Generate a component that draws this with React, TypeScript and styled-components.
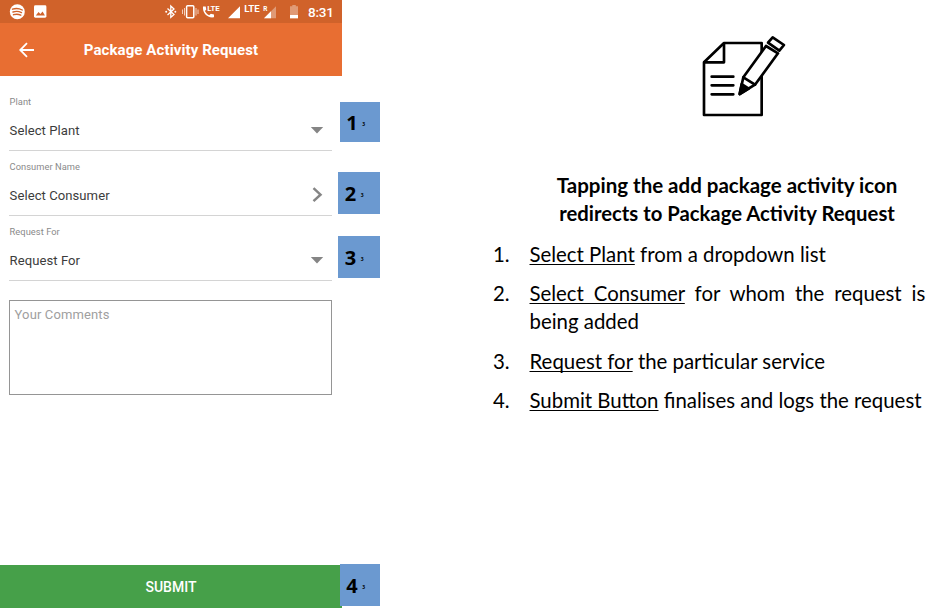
import React from 'react';
import styled, { createGlobalStyle } from 'styled-components';

const GlobalStyle = createGlobalStyle`
  * { box-sizing: border-box; }
  body { margin: 0; background: #fff; overflow: hidden; }
`;

const Page = styled.main`
  display: flex;
  width: 936px;
  height: 608px;
  background: #fff;
`;

const Phone = styled.section`
  position: relative;
  display: flex;
  flex-direction: column;
  flex: 0 0 342px;
  height: 608px;
  font-family: Roboto, sans-serif;
`;

const StatusBar = styled.div`
  flex: 0 0 23px;
  background: #d0622a;
`;

const StatusIcons = styled.svg`
  display: block;
  width: 342px;
  height: 23px;
`;

const AppBar = styled.header`
  display: flex;
  align-items: center;
  flex: 0 0 53px;
  padding-left: 19px;
  background: #e86e32;
`;

const BackIcon = styled.svg`
  width: 16px;
  height: 16px;
`;

const Title = styled.h1`
  margin: 1px 0 0;
  width: 272px;
  text-align: center;
  color: #fff;
  font-size: 15px;
  font-weight: 700;
  letter-spacing: 0.1px;
`;

const Form = styled.div`
  display: flex;
  flex-direction: column;
  flex: 1;
  padding: 10px 10px 0 9px;
`;

const Field = styled.div`
  display: flex;
  flex-direction: column;
  height: 65px;
  padding: 10px 0 0 0.6px;
  border-bottom: 1px solid #d4d4d4;
`;

const Label = styled.span`
  height: 12px;
  line-height: 12px;
  font-size: 9.3px;
  letter-spacing: 0.05px;
  color: #8a8a8a;
`;

const Control = styled.div`
  display: flex;
  align-items: center;
  justify-content: space-between;
  height: 22px;
  margin-top: 11px;
  padding-right: 8px;
  font-size: 13.1px;
  letter-spacing: 0.05px;
  color: #3c3c3c;
`;

const FieldIcon = styled.svg`
  width: 14px;
  height: 16px;
`;

const Comments = styled.div`
  height: 95px;
  margin-top: 19px;
  padding: 6px 4.6px;
  border: 1px solid #959595;
  line-height: 16px;
  font-size: 13px;
  letter-spacing: 0.12px;
  color: #a0a0a0;
`;

const Submit = styled.div`
  display: flex;
  align-items: center;
  justify-content: center;
  flex: 0 0 43px;
  background: #46a049;
  color: #fff;
  font-size: 14px;
  font-weight: 500;
`;

const Badge = styled.div<{ $top: number; $wide?: boolean }>`
  position: absolute;
  top: ${(p) => p.$top}px;
  left: ${(p) => (p.$wide ? 338 : 340)}px;
  display: flex;
  align-items: center;
  gap: 4.5px;
  width: ${(p) => (p.$wide ? 42 : 40)}px;
  height: ${(p) => (p.$top === 102 ? 40 : 42)}px;
  padding: 0 0 0 ${(p) => (p.$wide ? 6.8 : 6.3)}px;
  background: #6b99d0;
  color: #000;
  font: 700 20px 'Open Sans', sans-serif;
`;

const Small = styled.span`
  margin-top: 4px;
  font-size: 5px;
  line-height: 5px;
`;

const Guide = styled.section`
  display: flex;
  flex-direction: column;
  margin-left: 146px;
  width: 448px;
  padding-top: 30px;
  font-family: Lato, sans-serif;
  font-size: 20.4px;
  line-height: 28px;
  color: #000;
`;

const NoteIcon = styled.svg`
  width: 105px;
  height: 95px;
  margin-left: 202px;
`;

const Heading = styled.h2`
  margin: 46px 0 0 18px;
  width: 442px;
  text-align: center;
  font-size: 20.5px;
  font-weight: 700;
  line-height: 28px;
`;

const Line = styled.span<{ $size?: number; $words?: number }>`
  display: block;
  white-space: nowrap;
  font-size: ${(p) => (p.$size ? `${p.$size}px` : 'inherit')};
  word-spacing: ${(p) => p.$words ?? 0}px;
`;

const Steps = styled.ol`
  display: flex;
  flex-direction: column;
  gap: 11.3px;
  margin: 13px 0 0;
  padding: 0;
  list-style: none;
`;

const Step = styled.li`
  display: grid;
  grid-template-columns: 36.5px 1fr;
  margin-left: 5px;
`;

const Link = styled.span`
  text-decoration: underline;
  text-decoration-thickness: 1.3px;
  text-underline-offset: 2px;
  text-decoration-skip-ink: none;
`;

const Arrow = () => (
  <FieldIcon viewBox="0 0 14 16"><path d="M0.8 5H13.2L7 11.5Z" fill="#858585" /></FieldIcon>
);
const Chevron = () => (
  <FieldIcon viewBox="0 0 14 16"><path d="M3.5 1.2L10.5 7.7L3.5 14.2" fill="none" stroke="#858585" strokeWidth="2.5" /></FieldIcon>
);

const fields = [
  { label: 'Plant', value: 'Select Plant', icon: <Arrow /> },
  { label: 'Consumer Name', value: 'Select Consumer', icon: <Chevron /> },
  { label: 'Request For', value: 'Request For', icon: <Arrow /> },
];

const badges = [
  { n: 1, top: 102, wide: false },
  { n: 2, top: 172, wide: true },
  { n: 3, top: 236, wide: true },
  { n: 4, top: 564, wide: false },
];

function Status() {
  return (
    <StatusIcons viewBox="0 0 342 23" fill="#fff" fontFamily="Roboto, sans-serif">
      <circle cx="17.3" cy="11.7" r="7.5" />
      <path d="M12.5 9.2Q17.5 7.5 22.3 10M13 12Q17.5 10.5 21.5 12.6M13.5 14.7Q17.5 13.5 20.8 15.2" fill="none" stroke="#d0622a" strokeWidth="1.4" strokeLinecap="round" />
      <rect x="34" y="5.3" width="12.4" height="12.4" rx="1.4" />
      <path d="M35.8 15.6L38.6 12.1L40.4 14.1L42.6 11.6L44.9 15.6Z" fill="#d0622a" />
      <path d="M167.5 8.5L174 14.5L170.8 17.4V6L174 8.9L167.5 15" fill="none" stroke="#fff" strokeWidth="1.3" />
      <circle cx="166.2" cy="11.8" r="1" /><circle cx="175.3" cy="11.8" r="1" />
      <rect x="186.6" y="5.8" width="7.2" height="12" rx="1" fill="none" stroke="#fff" strokeWidth="1.5" />
      <path d="M184.5 8V15.5M196 8V15.5M182.5 9.5V14M198 9.5V14" stroke="#f4cdb9" strokeWidth="1" />
      <path d="M203 6.5H205.7L206.3 9.6L204.9 11C205.9 13 207.2 14.3 209.2 15.3L210.8 13.8L214 14.5V17.3C207.5 18.5 202.2 12.8 203 6.5Z" />
      <text x="207.2" y="10.6" fontSize="8" fontWeight="700" textLength="12.5" lengthAdjust="spacingAndGlyphs">LTE</text>
      <path d="M228 18.2L240 6.2V18.2Z" />
      <text x="244.2" y="12.2" fontSize="9" fontWeight="700" textLength="15.5" lengthAdjust="spacingAndGlyphs">LTE</text>
      <text x="263.3" y="11.2" fontSize="6.5" fontWeight="700">R</text>
      <path d="M264 18.2L276 6.2V18.2Z" fill="#e09a76" />
      <path d="M264 18.2L271 11.2V18.2Z" />
      <path d="M290 6.2H292.3V5H295.8V6.2H298V18.3H290Z" fill="#e09a76" />
      <rect x="290" y="15" width="8" height="3.3" />
      <text x="308" y="16.8" fontSize="13.5" fontWeight="500" textLength="26">8:31</text>
    </StatusIcons>
  );
}

export default function App() {
  return (
    <Page>
      <GlobalStyle />
      <Phone>
        <StatusBar><Status /></StatusBar>
        <AppBar>
          <BackIcon viewBox="0 0 16 16"><path d="M15 8H1.8M8 1.2L1.2 8L8 14.8" fill="none" stroke="#fff" strokeWidth="1.8" /></BackIcon>
          <Title>Package Activity Request</Title>
        </AppBar>
        <Form>
          {fields.map((f) => (
            <Field key={f.label}>
              <Label>{f.label}</Label>
              <Control>{f.value}{f.icon}</Control>
            </Field>
          ))}
          <Comments>Your Comments</Comments>
        </Form>
        <Submit>SUBMIT</Submit>
        {badges.map((b) => (
          <Badge key={b.n} $top={b.top} $wide={b.wide}>{b.n}<Small>3</Small></Badge>
        ))}
      </Phone>
      <Guide>
        <NoteIcon viewBox="0 0 315 285" fill="none" stroke="#000" strokeWidth="8" strokeLinecap="round" strokeLinejoin="round">
          <path d="M102 39H215V255H42V97Z" />
          <path d="M102 41V97H43M65 140H130M65 166H130M65 193H130" />
          <path d="M160 142L228 48L264 70L195 164L149 192Z" fill="#fff" />
          <path d="M160 142L195 164" />
          <path d="M155 162L176 176L149 192Z" fill="#000" />
          <path d="M248 22L282 45L268 62L234 38Z" fill="#fff" />
        </NoteIcon>
        <Heading>
          <Line>Tapping the add package activity icon</Line>
          <Line $size={20.3}>redirects to Package Activity Request</Line>
        </Heading>
        <Steps>
          <Step><span>1.</span><Line><Link>Select Plant</Link> from a dropdown list</Line></Step>
          <Step>
            <span>2.</span>
            <div>
              <Line $words={4.6}><Link>Select Consumer</Link> for whom the request is</Line>
              <Line>being added</Line>
            </div>
          </Step>
          <Step><span>3.</span><Line><Link>Request for</Link> the particular service</Line></Step>
          <Step><span>4.</span><Line><Link>Submit Button</Link> finalises and logs the request</Line></Step>
        </Steps>
      </Guide>
    </Page>
  );
}
